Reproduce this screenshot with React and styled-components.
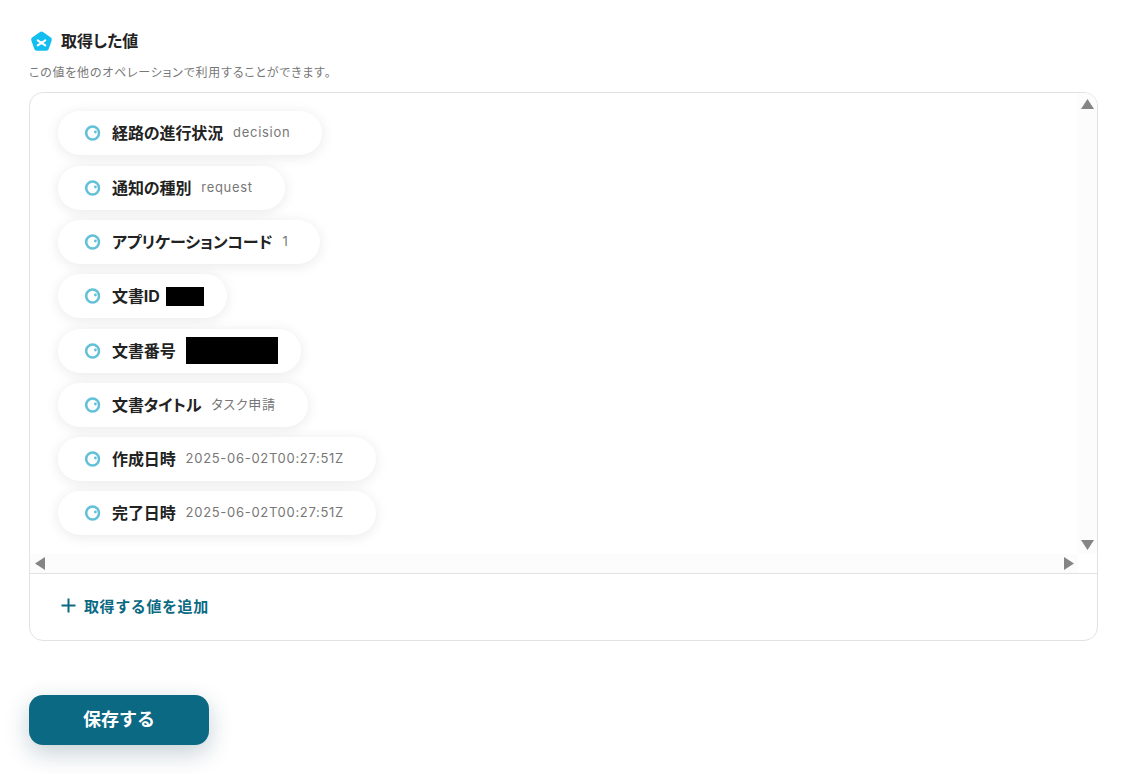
import React from 'react';
import styled, { createGlobalStyle } from 'styled-components';

const GlobalStyle = createGlobalStyle`
  html, body {
    margin: 0;
    padding: 0;
    background: #fff;
  }
  body {
    font-family: Inter, "Noto Sans CJK JP", "Noto Sans", sans-serif;
    font-feature-settings: "palt";
    color: #222;
  }
`;

const Page = styled.div`
  width: 1130px;
  height: 774px;
  box-sizing: border-box;
  padding: 29px 32px 0 29px;
  overflow: hidden;
`;

const TitleRow = styled.div`
  display: flex;
  align-items: center;
  gap: 8px;
  height: 25px;
  padding-left: 1px;
`;

const Title = styled.h2`
  margin: 0;
  font-size: 16px;
  font-weight: 700;
  line-height: 25px;
  color: #222;
`;

const Hint = styled.p`
  margin: 10px 0 0;
  font-size: 12px;
  line-height: 18px;
  letter-spacing: 0.77px;
  color: #777;
`;

const Card = styled.section`
  margin-top: 10px;
  height: 549px;
  box-sizing: border-box;
  border: 1px solid #e2e2e2;
  border-radius: 14px;
  display: flex;
  flex-direction: column;
  overflow: hidden;
`;

const Scroller = styled.div`
  height: 480px;
  flex: none;
  display: grid;
  grid-template-columns: 1fr 19px;
  grid-template-rows: 1fr 19px;
`;

const PillList = styled.ul`
  list-style: none;
  margin: 0;
  padding: 18.2px 0 0 28px;
  display: flex;
  flex-direction: column;
  align-items: flex-start;
  gap: 10.33px;
  min-height: 0;
`;

const Pill = styled.li`
  height: 44px;
  box-sizing: border-box;
  padding: 0 ${({ $right }) => $right}px 0 27px;
  border-radius: 22px;
  background: #fff;
  box-shadow: 0 2px 14px rgba(0, 0, 0, 0.09);
  display: flex;
  align-items: center;
  white-space: nowrap;
`;

const PillIcon = styled.svg`
  width: 16px;
  height: 16px;
  flex: none;
  margin-right: 11px;
`;

const Label = styled.span`
  margin-top: -2px;
  font-size: 16px;
  font-weight: 700;
  letter-spacing: -0.1px;
  color: #222;
`;

const Value = styled.span`
  margin: -2px 0 0 10px;
  font-size: 13px;
  letter-spacing: 0.7px;
  color: #777;
`;

const Redacted = styled.span`
  display: block;
  flex: none;
  background: #000;
  margin-left: ${({ $gap }) => $gap}px;
  width: ${({ $w }) => $w}px;
  height: ${({ $h }) => $h}px;
`;

const VTrack = styled.div`
  grid-column: 2;
  grid-row: 1;
  background: #fcfcfc;
  display: flex;
  flex-direction: column;
  justify-content: space-between;
  align-items: center;
  padding: 6px 0 4px;
`;

const HTrack = styled.div`
  grid-column: 1;
  grid-row: 2;
  background: #fcfcfc;
  display: flex;
  justify-content: space-between;
  align-items: center;
  padding: 0 4px 0 5px;
`;

const Corner = styled.div`
  grid-column: 2;
  grid-row: 2;
  background: #fff;
`;

const Arrow = styled.svg`
  display: block;
  width: ${({ $w }) => $w}px;
  height: ${({ $h }) => $h}px;
  fill: #858585;
`;

const CardFooter = styled.div`
  flex: 1;
  border-top: 1px solid #e2e2e2;
  display: flex;
  align-items: center;
  padding: 0 0 3px 31px;
`;

const AddButton = styled.button`
  border: 0;
  background: none;
  padding: 0;
  display: flex;
  align-items: center;
  gap: 8px;
  font-family: inherit;
  font-size: 15px;
  font-weight: 700;
  letter-spacing: 0.6px;
  color: #0b6983;
`;

const SaveButton = styled.button`
  display: block;
  margin-top: 54px;
  width: 180px;
  height: 50px;
  padding: 0 0 4px;
  border: 0;
  border-radius: 14px;
  background: #0b6983;
  box-shadow: 0 8px 24px rgba(11, 60, 80, 0.24);
  font-family: inherit;
  font-size: 18px;
  font-weight: 700;
  color: #fff;
`;

const fields = [
  { label: '経路の進行状況', value: 'decision' },
  { label: '通知の種別', value: 'request' },
  { label: 'アプリケーションコード', value: '1' },
  { label: '文書ID', hidden: { gap: 6, w: 38, h: 19 } },
  { label: '文書番号', hidden: { gap: 10, w: 92, h: 27 } },
  { label: '文書タイトル', value: 'タスク申請' },
  { label: '作成日時', value: '2025-06-02T00:27:51Z' },
  { label: '完了日時', value: '2025-06-02T00:27:51Z' },
];

const LogoMark = () => (
  <svg width="23" height="22" viewBox="0 0 22 22" preserveAspectRatio="none" aria-hidden="true">
    <path
      d="M9.6 1.1a2.4 2.4 0 0 1 2.8 0l7.5 5.4a2.4 2.4 0 0 1 .9 2.7l-2.9 8.9a2.4 2.4 0 0 1-2.3 1.7H6.4a2.4 2.4 0 0 1-2.3-1.7L1.2 9.2a2.4 2.4 0 0 1 .9-2.7z"
      fill="#12bdf0"
    />
    <path d="M7.4 9.4 14.6 14.4M14.6 9.4 7.4 14.4" fill="none" stroke="#fff" strokeWidth="2" strokeLinecap="round" />
  </svg>
);

const ValueIcon = () => (
  <PillIcon viewBox="0 0 16 16" aria-hidden="true">
    <circle cx="7.6" cy="8" r="6.4" fill="none" stroke="#62c0d8" strokeWidth="2.5" />
    <circle cx="10.4" cy="7" r="1.4" fill="#62c0d8" />
  </PillIcon>
);

export default function App() {
  return (
    <Page>
      <GlobalStyle />
      <TitleRow>
        <LogoMark />
        <Title>取得した値</Title>
      </TitleRow>
      <Hint>この値を他のオペレーションで利用することができます。</Hint>
      <Card>
        <Scroller>
          <PillList>
            {fields.map((f) => (
              <Pill key={f.label} $right={f.hidden ? 23 : 32}>
                <ValueIcon />
                <Label>{f.label}</Label>
                {f.hidden ? (
                  <Redacted $gap={f.hidden.gap} $w={f.hidden.w} $h={f.hidden.h} />
                ) : (
                  <Value>{f.value}</Value>
                )}
              </Pill>
            ))}
          </PillList>
          <VTrack>
            <Arrow $w={13} $h={10} viewBox="0 0 13 10"><path d="M6.5 0 13 10H0z" /></Arrow>
            <Arrow $w={13} $h={10} viewBox="0 0 13 10"><path d="M0 0h13L6.5 10z" /></Arrow>
          </VTrack>
          <HTrack>
            <Arrow $w={10} $h={13} viewBox="0 0 10 13"><path d="M10 0v13L0 6.5z" /></Arrow>
            <Arrow $w={10} $h={13} viewBox="0 0 10 13"><path d="M0 0l10 6.5L0 13z" /></Arrow>
          </HTrack>
          <Corner />
        </Scroller>
        <CardFooter>
          <AddButton type="button">
            <svg width="15" height="15" viewBox="0 0 15 15" aria-hidden="true">
              <path d="M7.5 0.5v14M0.5 7.5h14" stroke="#0b6983" strokeWidth="2" />
            </svg>
            取得する値を追加
          </AddButton>
        </CardFooter>
      </Card>
      <SaveButton type="button">保存する</SaveButton>
    </Page>
  );
}
